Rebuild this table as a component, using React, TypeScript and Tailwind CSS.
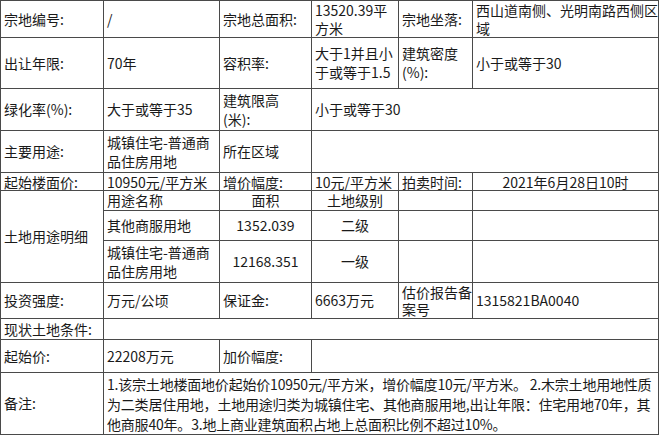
import React from 'react';

const cell = 'border border-[#4a4a4a] px-[3px] py-0 align-middle text-left';
const center = 'border border-[#4a4a4a] px-[3px] py-0 align-middle text-center';

const App: React.FC = () => {
    return (
        <div className="w-[660px] h-[435px] bg-white overflow-hidden">
            <table
                className="table-fixed border-collapse w-[658px] text-[14px] leading-[19px] text-[#1a1a1a]"
                style={{ fontFamily: '"Microsoft YaHei", "Noto Sans CJK SC", "Noto Sans", sans-serif' }}
            >
                <colgroup>
                    <col className="w-[103px]" />
                    <col className="w-[116px]" />
                    <col className="w-[92px]" />
                    <col className="w-[87px]" />
                    <col className="w-[74px]" />
                    <col className="w-[186px]" />
                </colgroup>
                <tbody>
                    {/* 第一行 */}
                    <tr className="h-[37px]">
                        <td className={cell}>宗地编号:</td>
                        <td className={cell}>/</td>
                        <td className={cell}>宗地总面积:</td>
                        <td className={cell + ' leading-[18px]'}>13520.39平<br />方米</td>
                        <td className={cell}>宗地坐落:</td>
                        <td className={cell + ' whitespace-nowrap leading-[18px]'}>西山道南侧、光明南路西侧区<br />域</td>
                    </tr>
                    <tr className="h-[51px]">
                        <td className={cell}>出让年限:</td>
                        <td className={cell}>70年</td>
                        <td className={cell}>容积率:</td>
                        <td className={cell + ' whitespace-nowrap'}>大于1并且小<br />于或等于1.5</td>
                        <td className={cell}>建筑密度<br />(%):</td>
                        <td className={cell}>小于或等于30</td>
                    </tr>
                    <tr className="h-[42px]">
                        <td className={cell}>绿化率(%):</td>
                        <td className={cell}>大于或等于35</td>
                        <td className={cell}>建筑限高<br />(米):</td>
                        <td className={cell} colSpan={3}>小于或等于30</td>
                    </tr>
                    <tr className="h-[42px]">
                        <td className={cell}>主要用途:</td>
                        <td className={cell + ' whitespace-nowrap'}>城镇住宅-普通商<br />品住房用地</td>
                        <td className={cell}>所在区域</td>
                        <td className={cell} colSpan={3}></td>
                    </tr>
                    <tr className="h-[18px] leading-[16px]">
                        <td className={cell}>起始楼面价:</td>
                        <td className={cell + ' whitespace-nowrap'}>10950元/平方米</td>
                        <td className={cell}>增价幅度:</td>
                        <td className={cell + ' whitespace-nowrap'}>10元/平方米</td>
                        <td className={cell}>拍卖时间:</td>
                        <td className={center}>2021年6月28日10时</td>
                    </tr>
                    {/* 土地用途明细 */}
                    <tr className="h-[20px] leading-[17px]">
                        <td className={cell + ' leading-[19px]'} rowSpan={3}>土地用途明细</td>
                        <td className={cell}>用途名称</td>
                        <td className={center}>面积</td>
                        <td className={center}>土地级别</td>
                        <td className={cell}></td>
                        <td className={cell}></td>
                    </tr>
                    <tr className="h-[30px]">
                        <td className={cell}>其他商服用地</td>
                        <td className={center}>1352.039</td>
                        <td className={center}>二级</td>
                        <td className={cell}></td>
                        <td className={cell}></td>
                    </tr>
                    <tr className="h-[42px]">
                        <td className={cell + ' whitespace-nowrap'}>城镇住宅-普通商<br />品住房用地</td>
                        <td className={center}>12168.351</td>
                        <td className={center}>一级</td>
                        <td className={cell}></td>
                        <td className={cell}></td>
                    </tr>
                    <tr className="h-[36px]">
                        <td className={cell}>投资强度:</td>
                        <td className={cell}>万元/公顷</td>
                        <td className={cell}>保证金:</td>
                        <td className={cell}>6663万元</td>
                        <td className={cell + ' whitespace-nowrap leading-[17px]'}>估价报告备<br />案号</td>
                        <td className={cell}>1315821BA0040</td>
                    </tr>
                    <tr className="h-[21px] leading-[18px]">
                        <td className={cell + ' whitespace-nowrap'}>现状土地条件:</td>
                        <td className={cell} colSpan={5}></td>
                    </tr>
                    <tr className="h-[33px]">
                        <td className={cell}>起始价:</td>
                        <td className={cell}>22208万元</td>
                        <td className={cell}>加价幅度:</td>
                        <td className={cell} colSpan={3}></td>
                    </tr>
                    <tr className="h-[62px]">
                        <td className={cell}>备注:</td>
                        <td className={cell + ' whitespace-nowrap leading-[20px] tracking-[-0.2px]'} colSpan={5}>
                            1.该宗土地楼面地价起始价10950元/平方米，增价幅度10元/平方米。 2.木宗土地用地性质<br />
                            为二类居住用地，土地用途归类为城镇住宅、其他商服用地,出让年限：住宅用地70年，其<br />
                            他商服40年。3.地上商业建筑面积占地上总面积比例不超过10%。
                        </td>
                    </tr>
                </tbody>
            </table>
        </div>
    );
};

export default App;
